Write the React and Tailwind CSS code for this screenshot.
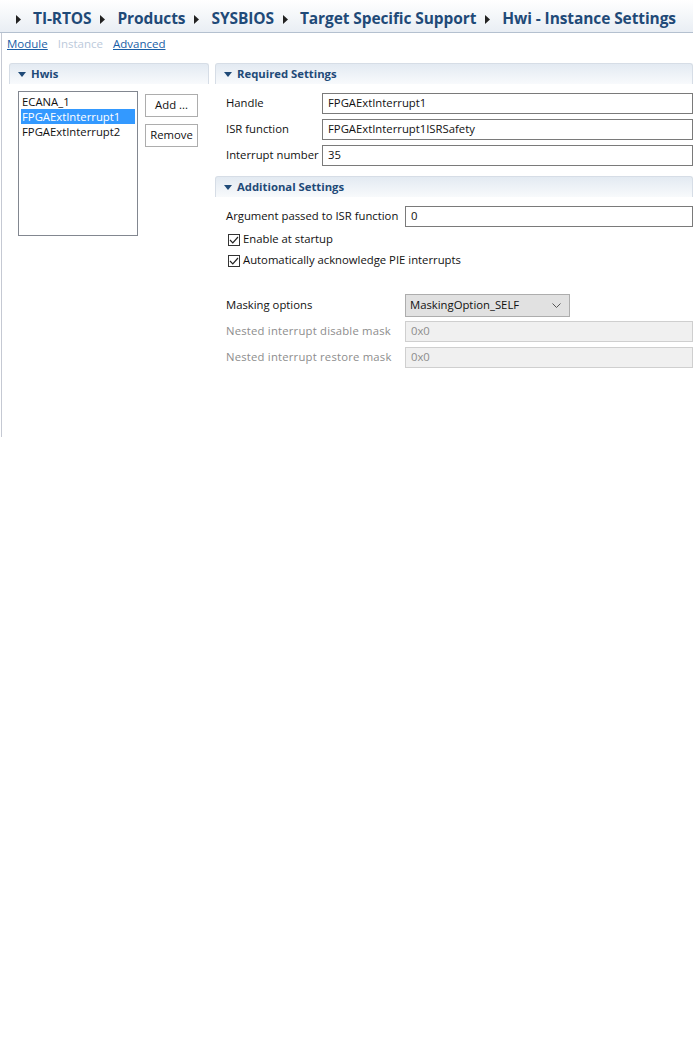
import React from 'react';

const ui = { fontFamily: '"Open Sans", "Noto Sans", Arial, sans-serif' };

function Crumb({ label }) {
  return (
    <div className="flex items-center">
      <svg width="5" height="9" viewBox="0 0 5 9" className="mr-[12px]">
        <path d="M0 0 L5 4.5 L0 9 Z" fill="#222" />
      </svg>
      <span className="text-[15.5px] font-bold text-[#1f4a78] tracking-[-0.1px] whitespace-nowrap">{label}</span>
    </div>
  );
}

function SectionHeader({ title }) {
  return (
    <div className="h-[21px] flex items-center rounded-t-[3px] border border-b-0 border-[#d6dde6] bg-gradient-to-b from-[#e3eaf2] to-[#f8fafc] pl-[8px]">
      <svg width="8" height="5" viewBox="0 0 8 5" className="mr-[5px]">
        <path d="M0 0 L8 0 L4 5 Z" fill="#1f4a78" />
      </svg>
      <span className="text-[11.3px] font-bold text-[#1f4a78]">{title}</span>
    </div>
  );
}

function Field({ label, value, labelW, disabled }) {
  return (
    <div className="flex items-center h-[26px]">
      <span
        className={`text-[11.3px] shrink-0 whitespace-nowrap ${disabled ? 'text-[#8d8d8d] tracking-[0.2px]' : 'text-[#111]'}`}
        style={{ width: labelW }}
      >
        {label}
      </span>
      <div
        className={`flex-1 h-[21px] flex items-center pl-[5px] text-[11.3px] border ${
          disabled ? 'bg-[#f0f0f0] border-[#cfcfcf] text-[#8d8d8d]' : 'bg-white border-[#7a7a7a] text-[#111]'
        }`}
      >
        {value}
      </div>
    </div>
  );
}

function Check({ label }) {
  return (
    <div className="flex items-center h-[21px] pl-[2px]">
      <div className="w-[12px] h-[12px] border border-[#333] bg-white flex items-center justify-center mr-[3px]">
        <svg width="10" height="8" viewBox="0 0 10 8">
          <path d="M1 4 L3.8 6.8 L9 1" stroke="#222" strokeWidth="1.2" fill="none" />
        </svg>
      </div>
      <span className="text-[11.3px] text-[#111]">{label}</span>
    </div>
  );
}

export default function App() {
  const items = ['ECANA_1', 'FPGAExtInterrupt1', 'FPGAExtInterrupt2'];
  return (
    <div className="w-[693px] h-[1050px] bg-white overflow-hidden" style={ui}>
      {/* breadcrumb */}
      <div className="h-[33px] flex items-center gap-[9px] pl-[16px] pt-[6px] border-b border-[#b4c0cf] bg-gradient-to-b from-[#ffffff] to-[#e9eef4]">
        <Crumb label="TI-RTOS" />
        <Crumb label="Products" />
        <Crumb label="SYSBIOS" />
        <Crumb label="Target Specific Support" />
        <Crumb label="Hwi - Instance Settings" />
      </div>

      <div className="ml-[1px] h-[404px] border-l border-[#c5c9d3]">
        {/* page tabs */}
        <div className="flex gap-[10px] pl-[5px] pt-[2px] h-[30px] text-[11.5px]">
          <span className="underline text-[#1a5ea6]">Module</span>
          <span className="text-[#bccadb]">Instance</span>
          <span className="underline text-[#1a5ea6]">Advanced</span>
        </div>

        <div className="flex">
          {/* instance list */}
          <div className="w-[200px] ml-[7px]">
            <SectionHeader title="Hwis" />
            <div className="flex pl-[9px] pt-[7px]">
              <div className="w-[120px] h-[145px] border border-[#828790] bg-white pt-[2px] px-[2px]">
                {items.map((it) => (
                  <div
                    key={it}
                    className={`h-[15px] leading-[15px] text-[11.3px] pl-[1px] ${
                      it === 'FPGAExtInterrupt1' ? 'bg-[#3399ff] text-white' : 'text-[#111]'
                    }`}
                  >
                    {it}
                  </div>
                ))}
              </div>
              <div className="flex flex-col gap-[7px] ml-[7px] pt-[3px]">
                <div className="w-[53px] h-[23px] border border-[#adadad] bg-white flex items-center justify-center text-[11.3px] text-[#111]">
                  Add ...
                </div>
                <div className="w-[53px] h-[23px] border border-[#adadad] bg-white flex items-center justify-center text-[11.3px] text-[#111]">
                  Remove
                </div>
              </div>
            </div>
          </div>

          {/* settings */}
          <div className="flex-1 ml-[6px]">
            <SectionHeader title="Required Settings" />
            <div className="pl-[11px] pt-[6px]">
              <Field label="Handle" value="FPGAExtInterrupt1" labelW={96} />
              <Field label="ISR function" value="FPGAExtInterrupt1ISRSafety" labelW={96} />
              <Field label="Interrupt number" value="35" labelW={96} />
            </div>

            <div className="mt-[8px]">
              <SectionHeader title="Additional Settings" />
            </div>
            <div className="pl-[11px] pt-[6px]">
              <Field label="Argument passed to ISR function" value="0" labelW={179} />
              <Check label="Enable at startup" />
              <Check label="Automatically acknowledge PIE interrupts" />

              <div className="flex items-center h-[26px] mt-[21px]">
                <span className="w-[179px] text-[11.3px] text-[#111] shrink-0">Masking options</span>
                <div className="w-[165px] h-[23px] border border-[#adadad] bg-[#e1e1e1] flex items-center justify-between pl-[4px] pr-[8px] text-[11.3px] text-[#111]">
                  <span>MaskingOption_SELF</span>
                  <svg width="9" height="5" viewBox="0 0 9 5">
                    <path d="M0.5 0.5 L4.5 4.5 L8.5 0.5" stroke="#555" strokeWidth="1" fill="none" />
                  </svg>
                </div>
              </div>
              <Field label="Nested interrupt disable mask" value="0x0" labelW={179} disabled />
              <Field label="Nested interrupt restore mask" value="0x0" labelW={179} disabled />
            </div>
          </div>
        </div>
      </div>
    </div>
  );
}
